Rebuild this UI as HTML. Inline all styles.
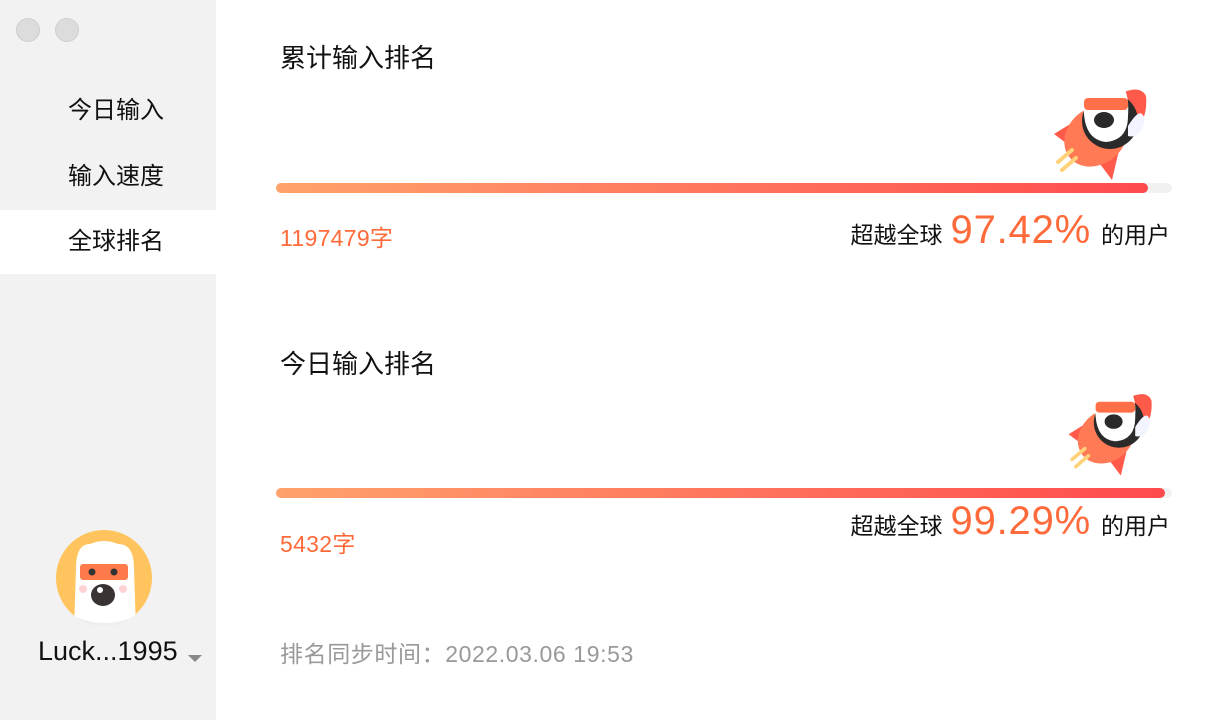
<!DOCTYPE html>
<html><head><meta charset="utf-8"><style>
*{margin:0;padding:0;box-sizing:border-box}
body{width:1232px;height:720px;overflow:hidden;background:#fff;font-family:"Liberation Sans","Noto Sans CJK SC",sans-serif;position:relative}
.side{position:absolute;left:0;top:0;width:216px;height:720px;background:#f2f2f2}
.dot{position:absolute;top:18px;width:24px;height:24px;border-radius:50%;background:#dcdcdc;border:1px solid #cfcfcf}
.nav{position:absolute;left:0;width:216px;height:64px;line-height:64px;padding-left:68px;font-size:24px;color:#111}
.t{position:absolute;font-size:26px;color:#111}
.bar{position:absolute;left:276px;width:896px;height:10px;border-radius:5px;background:#f1f1f1}
.fill{height:10px;border-radius:5px;background:linear-gradient(90deg,#ffa26c,#ff4a4e)}
.num{position:absolute;font-size:23px;color:#ff6a3a;letter-spacing:0.3px}
.pct{position:absolute;right:62px;font-size:23px;color:#111;white-space:nowrap}
.pct b{font-weight:normal;font-size:40px;color:#ff6a3a;margin:0 10px 0 8px;letter-spacing:0.8px}
svg{overflow:visible}
</style></head><body>
<div class="side">
<div class="dot" style="left:16px"></div><div class="dot" style="left:55px"></div>
<div class="nav" style="top:79px">今日输入</div>
<div class="nav" style="top:145px">输入速度</div>
<div class="nav" style="top:210px;background:#fff">全球排名</div>
<svg style="position:absolute;left:56px;top:530px" width="96" height="96" viewBox="0 0 96 96">
<defs><clipPath id="c"><circle cx="48" cy="48" r="48"/></clipPath></defs>
<circle cx="48" cy="48" r="48" fill="#ffc45e"/>
<g clip-path="url(#c)"><path d="M18 100 L20 38 Q20 14 34 14 Q48 8 62 14 Q78 14 78 38 L80 100Z" fill="#fff"/>
<path d="M18 86 Q48 100 80 86 L80 100 L18 100Z" fill="#eee"/>
<rect x="24" y="34" width="48" height="16" rx="3" fill="#ff7a4a"/>
<circle cx="36" cy="42" r="3.5" fill="#333"/><circle cx="58" cy="42" r="3.5" fill="#333"/>
<ellipse cx="47" cy="65" rx="12" ry="11" fill="#3a3333"/><circle cx="44" cy="60" r="3" fill="#fff"/>
<circle cx="27" cy="59" r="4" fill="#ffd3d3"/><circle cx="67" cy="59" r="4" fill="#ffd3d3"/></g>
</svg>
<div style="position:absolute;left:38px;top:636px;font-size:27px;color:#111">Luck...1995</div>
<div style="position:absolute;left:188px;top:655px;border:7px solid transparent;border-top:7px solid #888;border-bottom:0"></div>
</div>

<div class="t" style="left:280px;top:38px">累计输入排名</div>
<div class="bar" style="top:183px"><div class="fill" style="width:872px"></div></div>
<div class="num" style="left:280px;top:219px">1197479字</div>
<div class="pct" style="top:208px">超越全球<b>97.42%</b>的用户</div>

<div class="t" style="left:280px;top:344px">今日输入排名</div>
<div class="bar" style="top:488px"><div class="fill" style="width:889px"></div></div>
<div class="num" style="left:280px;top:525px">5432字</div>
<div class="pct" style="top:499px">超越全球<b>99.29%</b>的用户</div>

<div style="position:absolute;left:280px;top:635px;font-size:23px;color:#999;letter-spacing:0.6px">排名同步时间：2022.03.06 19:53</div>

<svg width="0" height="0" style="position:absolute"><defs><g id="m">
<path d="M14 58 L40 42 L30 70Z" fill="#ff5a4a"/>
<path d="M60 88 L80 70 L72 104Z" fill="#ff5a4a"/>
<ellipse cx="56" cy="60" rx="34" ry="28" transform="rotate(-40 56 60)" fill="#ff7a55"/>
<path d="M80 18 Q100 8 106 20 Q108 40 96 56Z" fill="#ff5a4a"/>
<circle cx="70" cy="45" r="28" fill="#2a2a2a"/>
<path d="M44 38 Q40 10 54 6 Q64 0 76 6 Q90 10 88 40 Q88 64 66 66 Q46 64 44 38Z" fill="#fff"/>
<rect x="44" y="22" width="44" height="12" rx="4" fill="#ff7048"/>
<ellipse cx="64" cy="44" rx="10" ry="8" fill="#2a2a2a"/>
<path d="M88 50 Q98 34 102 38 Q108 44 100 56 Q94 62 88 60Z" fill="#f2f4ff"/>
<path d="M18 86 L32 74 M22 94 L36 82" stroke="#ffd27a" stroke-width="4" stroke-linecap="round"/>
</g></defs></svg>
<svg style="position:absolute;left:1040px;top:76px" width="140" height="120" viewBox="0 0 140 120"><use href="#m"/></svg>
<svg style="position:absolute;left:1056px;top:382px" width="126" height="108" viewBox="0 0 140 120"><use href="#m"/></svg>
</body></html>
